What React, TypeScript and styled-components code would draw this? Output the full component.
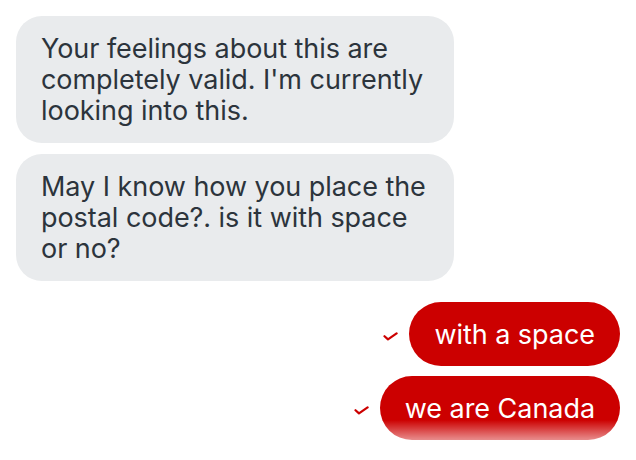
import React from "react";
import styled, { createGlobalStyle } from "styled-components";

const Global = createGlobalStyle`
  html, body { margin: 0; padding: 0; background: #ffffff; }
  body { font-family: Inter, "Noto Sans", sans-serif; -webkit-font-smoothing: antialiased; }
`;

const Screen = styled.div`
  position: relative;
  width: 636px;
  height: 460px;
  overflow: hidden;
  background: #ffffff;
`;

const Thread = styled.div`
  display: flex;
  flex-direction: column;
  padding: 16px 16px 0 16px;
`;

const Incoming = styled.div<{ $gap?: number }>`
  align-self: flex-start;
  box-sizing: border-box;
  width: 438px;
  margin-bottom: ${(p) => p.$gap ?? 11}px;
  padding: 17px 24px 17px 25px;
  background: #e9ebed;
  color: #2c343c;
  border-radius: 26px;
  font-size: 27px;
  line-height: 31px;
  letter-spacing: -0.05px;
`;

const OutRow = styled.div`
  display: flex;
  justify-content: flex-end;
  align-items: center;
  gap: 11px;
  margin-bottom: 10px;
`;

const Outgoing = styled.div`
  box-sizing: border-box;
  height: 64px;
  padding: 0 25px;
  display: flex;
  align-items: center;
  background: #cc0000;
  color: #ffffff;
  border-radius: 32px;
  font-size: 27px;
  letter-spacing: -0.05px;
  white-space: nowrap;
`;

const Check = styled.svg`
  width: 15px;
  height: 9px;
  flex: none;
  margin-top: 4px;
`;

const Fade = styled.div`
  position: absolute;
  left: 0;
  right: 0;
  bottom: 0;
  height: 40px;
  background: linear-gradient(
    to bottom,
    rgba(255, 255, 255, 0) 0%,
    rgba(255, 255, 255, 0.5) 45%,
    rgba(255, 255, 255, 1) 100%
  );
  pointer-events: none;
`;

const Tick = () => (
  <Check viewBox="0 0 15 9">
    <path d="M1.5 4.2 L5 7.4 L13.6 1.4" fill="none" stroke="#cc0000" strokeWidth="2.2" strokeLinecap="round" strokeLinejoin="round" />
  </Check>
);

export default function App() {
  return (
    <Screen>
      <Global />
      <Thread>
        <Incoming>Your feelings about this are completely valid. I'm currently looking into this.</Incoming>
        <Incoming $gap={21}>May I know how you place the postal code?. is it with space or no?</Incoming>
        <OutRow>
          <Tick />
          <Outgoing>with a space</Outgoing>
        </OutRow>
        <OutRow>
          <Tick />
          <Outgoing>we are Canada</Outgoing>
        </OutRow>
      </Thread>
      <Fade />
    </Screen>
  );
}
